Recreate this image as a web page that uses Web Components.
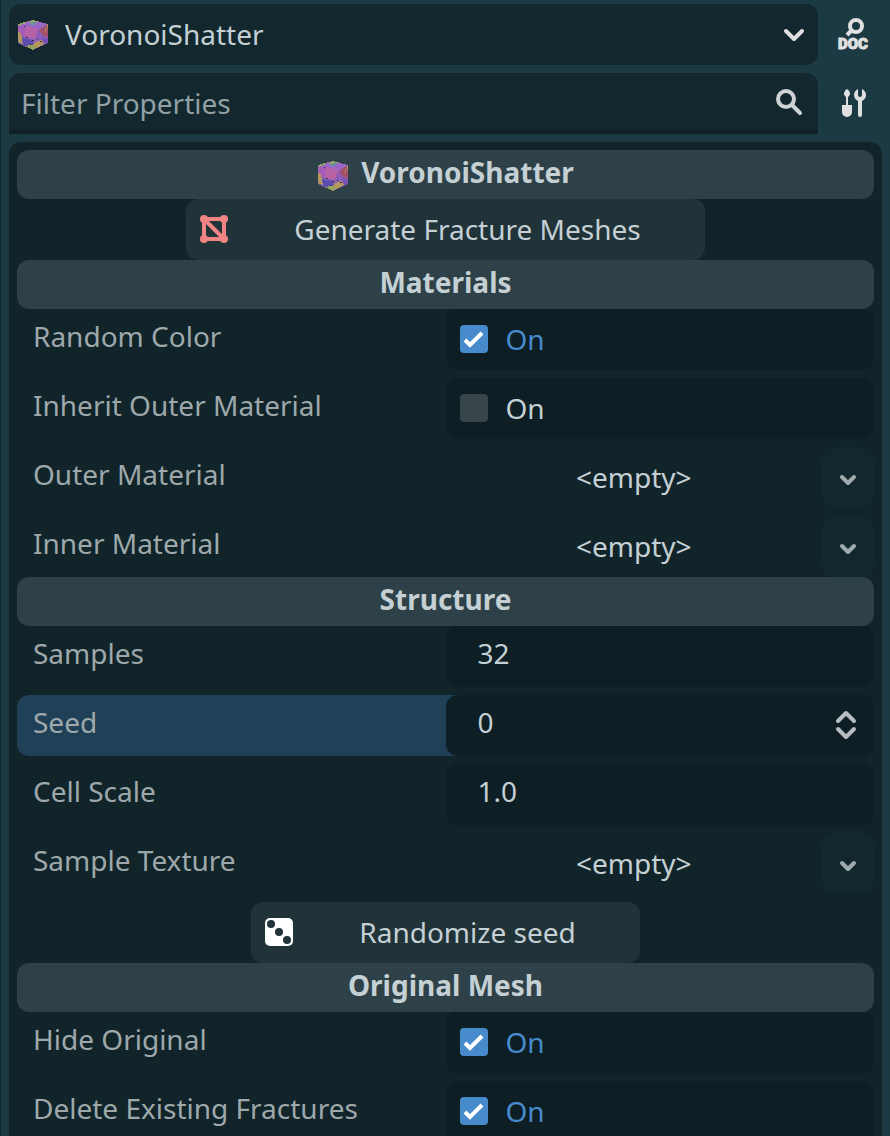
<!DOCTYPE html>
<html lang="en">
<head>
<meta charset="utf-8">
<meta name="viewport" content="width=device-width, initial-scale=1">
<title>Inspector</title>
<style>
  html, body { margin: 0; height: 100%; }
  body {
    overflow: hidden;
    background: #1b3a44;
    color: #c5d0d4;
    font: 28px/38px "Noto Sans", sans-serif;
    --panel: #10242a;
    --field: #0d1e24;
    --box: #12282e;
    --bar: #2e4148;
    --button: #203339;
    --label: #9ea8aa;
    --accent: #478bcd;
  }
</style>
</head>
<body>
<inspector-dock>
  <node-picker slot="top" name="VoronoiShatter"></node-picker>
  <icon-button slot="top" label="Open documentation">
    <svg width="40" height="36" viewBox="0 0 40 36" fill="none" stroke="#e0e0e0">
      <circle cx="22" cy="10" r="6" stroke-width="4"/>
      <path d="M18 14 13 19" stroke-width="4"/>
      <text x="19" y="33" text-anchor="middle" font-family="Roboto, sans-serif" font-weight="900" font-size="15" fill="#e0e0e0" stroke-width="1">DOC</text>
    </svg>
  </icon-button>
  <filter-box slot="filter"></filter-box>
  <icon-button slot="filter" label="Manage object properties">
    <svg width="32" height="32" viewBox="0 0 32 32" fill="#e0e0e0">
      <path d="M9 2c2 1 3 3 3 5 0 1-1 2-2 3v8h4v7a5 5 0 0 1-10 0v-7h4v-8C7 9 6 8 6 7c0-2 1-4 3-5Z"/>
      <path d="M20 2v6a2 2 0 0 0 4 0V2c2 1 4 3 4 6s-2 5-4 6v14a2 2 0 0 1-4 0V14c-2-1-4-3-4-6s2-5 4-6Z"/>
    </svg>
  </icon-button>

  <section-bar><voronoi-icon slot="icon"></voronoi-icon>VoronoiShatter</section-bar>
  <action-button>
    <svg slot="icon" width="32" height="32" viewBox="0 0 32 32" fill="#ee8582" stroke="#ee8582" stroke-width="4">
      <path d="M6 6h20v20H6ZM6 6l20 20" fill="none"/>
      <g stroke="none"><circle cx="6" cy="6" r="4"/><circle cx="26" cy="6" r="4"/><circle cx="6" cy="26" r="4"/><circle cx="26" cy="26" r="4"/></g>
    </svg>Generate Fracture Meshes</action-button>

  <section-bar>Materials</section-bar>
  <property-group>
    <property-row kind="check" label="Random Color" checked></property-row>
    <property-row kind="check" label="Inherit Outer Material"></property-row>
    <property-row kind="resource" label="Outer Material"></property-row>
    <property-row kind="resource" label="Inner Material"></property-row>
  </property-group>

  <section-bar>Structure</section-bar>
  <property-group>
    <property-row kind="number" label="Samples" value="32"></property-row>
    <property-row kind="number" label="Seed" value="0" selected spin></property-row>
    <property-row kind="number" label="Cell Scale" value="1.0"></property-row>
    <property-row kind="resource" label="Sample Texture"></property-row>
    <action-button>
      <svg slot="icon" width="32" height="32" viewBox="0 0 32 32">
        <rect x="2" y="2" width="28" height="28" rx="5" fill="#fff"/>
        <g fill="#203339"><circle cx="8" cy="8" r="4"/><circle cx="16" cy="16" r="4"/><circle cx="24" cy="24" r="4"/></g>
      </svg>Randomize seed</action-button>
  </property-group>

  <section-bar>Original Mesh</section-bar>
  <property-group>
    <property-row kind="check" label="Hide Original" checked></property-row>
    <property-row kind="check" label="Delete Existing Fractures" checked></property-row>
  </property-group>
</inspector-dock>

<script>
class Base extends HTMLElement {
  connectedCallback() {
    if (this.shadowRoot) return;
    const root = this.attachShadow({ mode: "open" });
    root.innerHTML = `<style>
      * { box-sizing: border-box; }
      button, input, select { font: inherit; color: inherit; border: 0; margin: 0; padding: 0; background: none; appearance: none; outline: none; }
      svg { display: block; flex: none; }
      ${this.css()}
    </style>${this.html()}`;
  }
  css() { return ""; }
  html() { return "<slot></slot>"; }
}

customElements.define("inspector-dock", class extends Base {
  css() { return `
    :host { display: flex; flex-direction: column; gap: 8px; box-sizing: border-box; height: 100vh; padding: 4px 8px 0; border-left: 1px solid #10262d; }
    .bar { display: grid; grid-template-columns: 1fr 56px; gap: 8px; flex: none; }
    main { flex: 1; min-height: 0; overflow: hidden; padding: 8px 8px 0; background: var(--panel); border-radius: 12px 12px 0 0; }`; }
  html() { return `
    <div class="bar"><slot name="top"></slot></div>
    <div class="bar"><slot name="filter"></slot></div>
    <main><slot></slot></main>`; }
});

customElements.define("voronoi-icon", class extends Base {
  css() { return `:host { display: block; flex: none; }`; }
  html() { return `
    <svg width="32" height="32" viewBox="0 0 32 32" shape-rendering="crispEdges" aria-hidden="true">
      <path fill="#8d62b4" d="M16 1 31 5V24L16 31 1 24V5Z"/>
      <path fill="#9a68c4" d="M16 1 31 5 21 11 1 7V5Z"/>
      <path fill="#a45cb4" d="M1 7 9 7 12 12 8 18 1 16Z"/>
      <path fill="#6a62ac" d="M1 15 7 18 13 29 1 24Z"/>
      <path fill="#b862a8" d="M9 7 21 10 18 20 8 18Z"/>
      <path fill="#8d5cb8" d="M21 11 27 17 24 20 18 20Z"/>
      <path fill="#a45068" d="M22 11 31 5V18L26 17Z"/>
      <path fill="#7a54b4" d="M25 18 31 19V24L25 27Z"/>
      <path fill="#5c4cae" d="M6 19 15 21 17 25 14 29 6 26Z"/>
      <path fill="#b39660" d="M18 23 25 21 27 25 20 29 15 27ZM1 13l3 1 1 6 1 5-5-2Z"/>
      <path fill="#96a35e" d="M8 27 14 26 20 28 16 31ZM10 3l6-2 6 2-6 1ZM1 5l7-2 1 1-7 3Z"/>
      <path fill="#668fac" d="M12 4 20 3 18 6 13 6Z"/>
      <path fill="#ad8b5c" d="M30 5h1v5h-1ZM28 9h1v4h-1Z"/>
      <path fill="#30284e" d="M7 7h1v1H7ZM9 18h2v1H9ZM15 21h2v1h-2ZM20 20h1v1h-1ZM23 22h2v1h-2ZM13 25h1v1h-1Z"/>
    </svg>`; }
});

customElements.define("node-picker", class extends Base {
  css() { return `
    :host { display: flex; align-items: center; gap: 16px; position: relative; padding: 0 8px; background: var(--box); border-radius: 12px; }
    select { flex: 1; min-width: 0; height: 61px; padding-bottom: 2px; }
    svg { pointer-events: none; }`; }
  html() { const n = this.getAttribute("name"); return `
    <voronoi-icon></voronoi-icon>
    <select aria-label="Edited node"><option>${n}</option></select>
    <svg width="32" height="32" viewBox="0 0 32 32" fill="none" stroke="#e0e0e0" stroke-width="4" stroke-linecap="round" stroke-linejoin="round"><path d="m8 12 8 8 8-8"/></svg>`; }
});

customElements.define("filter-box", class extends Base {
  css() { return `
    :host { display: flex; align-items: center; padding: 0 12px; background: var(--box); border-bottom: 4px solid #0e2127; border-radius: 12px 12px 0 0; }
    input { flex: 1; min-width: 0; height: 57px; padding-top: 2px; }
    input::placeholder { color: #91a0a4; opacity: 1; }`; }
  html() { return `
    <input type="text" aria-label="Filter properties" placeholder="Filter Properties">
    <svg width="32" height="32" viewBox="0 0 32 32" fill="none" stroke="#cfd3d4" stroke-width="4" stroke-linecap="round"><circle cx="12" cy="13" r="8"/><path d="m18 19 8 8"/></svg>`; }
});

customElements.define("icon-button", class extends Base {
  css() { return `
    :host { display: flex; }
    button { flex: 1; display: flex; align-items: center; justify-content: center; height: 61px; padding-bottom: 2px; }`; }
  html() { return `<button type="button" aria-label="${this.getAttribute("label")}"><slot></slot></button>`; }
});

customElements.define("section-bar", class extends Base {
  css() { return `
    :host { display: block; }
    h2 { display: flex; align-items: center; justify-content: center; gap: 12px; margin: 0; height: 49px; padding-bottom: 6px; font: inherit; font-weight: 700; background: var(--bar); border-radius: 12px; }
    ::slotted(voronoi-icon) { margin-top: 8px; }`; }
  html() { return `<h2><slot name="icon"></slot><span><slot></slot></span></h2>`; }
});

customElements.define("action-button", class extends Base {
  css() { return `
    :host { display: flex; justify-content: center; }
    button { display: flex; align-items: center; gap: 64px; height: 61px; padding: 0 64px 2px 12px; background: var(--button); border-radius: 12px; white-space: nowrap; }`; }
  html() { return `<button type="button"><slot name="icon"></slot><span><slot></slot></span></button>`; }
});

customElements.define("property-group", class extends Base {
  css() { return `:host { display: flex; flex-direction: column; gap: 8px; }`; }
});

customElements.define("property-row", class extends Base {
  css() { return `
    :host { display: grid; grid-template-columns: 1fr 1fr; height: 61px; }
    .name { display: flex; align-items: center; padding: 0 16px 8px; color: var(--label); border-radius: 12px 0 0 12px; white-space: nowrap; }
    :host([selected]) .name { margin-right: -12px; background: #1f4056; }
    .value { display: flex; align-items: center; min-width: 0; position: relative; border-radius: 12px; background: var(--field); }
    .check { gap: 18px; padding: 0 14px 2px; }
    .check input { width: 28px; height: 28px; border-radius: 4px; background: #38464b; }
    .check input:checked { background: var(--accent); }
    .check svg { position: absolute; left: 14px; pointer-events: none; visibility: hidden; }
    .check input:checked ~ svg { visibility: visible; }
    .check input:checked ~ span { color: var(--accent); }
    .number input { flex: 1; min-width: 0; height: 61px; padding: 0 0 8px 32px; }
    .number svg { margin: 0 12px 2px 0; }
    .resource { background: none; }
    .pick { flex: 1; height: 61px; padding-bottom: 2px; }
    .arrow { display: flex; align-items: center; justify-content: center; width: 52px; height: 61px; padding-top: 4px; border-radius: 12px; background: var(--box); }`; }
  html() {
    const label = this.getAttribute("label"), kind = this.getAttribute("kind");
    if (kind === "check") return `
      <label class="name" for="v">${label}</label>
      <label class="value check"><input id="v" type="checkbox" ${this.hasAttribute("checked") ? "checked" : ""}><svg width="28" height="28" viewBox="0 0 28 28" fill="none" stroke="#fff" stroke-width="4"><path d="m5 15 5 5L22 8"/></svg><span>On</span></label>`;
    if (kind === "number") return `
      <label class="name" for="v">${label}</label>
      <div class="value number"><input id="v" type="text" inputmode="decimal" value="${this.getAttribute("value")}">${this.hasAttribute("spin") ? `<svg width="32" height="32" viewBox="0 0 32 32" fill="none" stroke="#b7bdbf" stroke-width="4" stroke-linecap="round" stroke-linejoin="round"><path d="m8 12 8-8 8 8M8 20l8 8 8-8"/></svg>` : ""}</div>`;
    return `
      <span class="name" id="n">${label}</span>
      <div class="value resource"><button class="pick" type="button" aria-labelledby="n">&lt;empty&gt;</button><button class="arrow" type="button" aria-label="${label} options"><svg width="24" height="24" viewBox="0 0 24 24" fill="none" stroke="#a0abae" stroke-width="4" stroke-linecap="round" stroke-linejoin="round"><path d="m6 9 6 6 6-6"/></svg></button></div>`;
  }
});
</script>
</body>
</html>
